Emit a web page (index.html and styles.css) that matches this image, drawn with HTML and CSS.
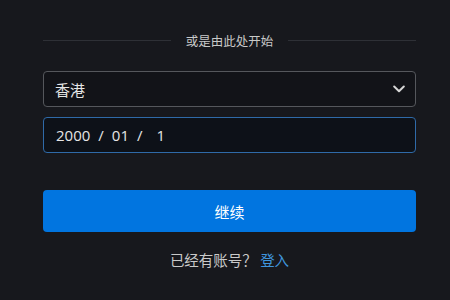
FILE: index.html
```html
<!DOCTYPE html>
<html lang="zh-CN">
<head>
  <meta charset="UTF-8">
  <title>注册</title>
  <link rel="stylesheet" href="styles.css">
</head>
<body>
  <div class="container">
    <div class="divider">
      <span class="line"></span>
      <span class="divider-text">或是由此处开始</span>
      <span class="line"></span>
    </div>

    <div class="field select">
      <span>香港</span>
      <svg class="chevron" width="12" height="8" viewBox="0 0 12 8">
        <path d="M1.2 1.5 L6 6.2 L10.8 1.5" fill="none" stroke="#d6d6d6" stroke-width="2" stroke-linecap="round" stroke-linejoin="round"/>
      </svg>
    </div>

    <div class="field date">
      <span>2000</span><span class="sep">/</span><span>01</span><span class="sep">/</span><span class="day">1</span>
    </div>

    <button class="btn-primary">继续</button>

    <p class="login">已经有账号？ <a href="#">登入</a></p>
  </div>
</body>
</html>
```

FILE: styles.css
```css
* {
  box-sizing: border-box;
  margin: 0;
  padding: 0;
}

body {
  font-family: 'Noto Sans CJK SC', 'Noto Sans', sans-serif;
  background: #17181d;
  height: 300px;
  overflow: hidden;
}

.container {
  width: 373px;
  margin-left: 43px;
  padding-top: 30px;
}

.divider {
  display: flex;
  align-items: center;
  gap: 15px;
  height: 20px;
}

.line {
  flex: 1;
  height: 1px;
  background: #2e3036;
}

.divider-text {
  color: #c9c9c9;
  font-size: 12.5px;
}

.field {
  height: 36px;
  border-radius: 4px;
  display: flex;
  align-items: center;
  font-size: 15px;
  color: #e6e6e6;
}

.select {
  margin-top: 21px;
  border: 1px solid #55575c;
  background: #121318;
  padding: 0 10px 0 11px;
  justify-content: space-between;
}

.date {
  margin-top: 10px;
  border: 1px solid #2f6aa8;
  background: #0d1118;
  padding: 0 12px;
  font-family: 'Open Sans', 'Noto Sans', sans-serif;
}

.sep {
  margin: 0 8px;
}

.day {
  margin-left: 6px;
}

.btn-primary {
  display: block;
  width: 100%;
  height: 42px;
  margin-top: 37px;
  border: none;
  border-radius: 4px;
  background: #0175e0;
  color: #fff;
  font-family: inherit;
  font-size: 15px;
}

.login {
  margin-top: 17px;
  text-align: center;
  color: #c9c9c9;
  font-size: 14.5px;
}

.login a {
  color: #3f94dc;
  text-decoration: none;
}
```
